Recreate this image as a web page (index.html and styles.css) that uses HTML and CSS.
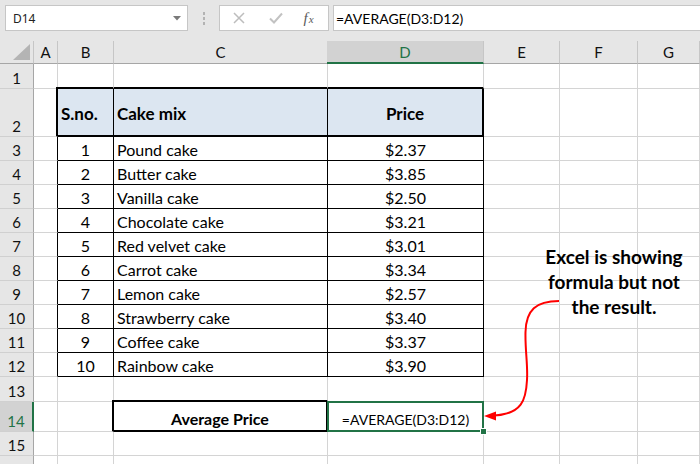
FILE: index.html
```html
<!DOCTYPE html>
<html>
<head>
<meta charset="utf-8">
<link rel="stylesheet" href="styles.css">
</head>
<body>
<div class="app">
  <div class="fbar">
    <div class="namebox"><span>D14</span><svg class="caret" width="8" height="5" viewBox="0 0 8 5"><path d="M0 0H8L4 4.5Z" fill="#7a7a7a"/></svg></div>
    <div class="grip"><i></i><i></i><i></i></div>
    <div class="btns">
      <span class="bx"><svg width="12" height="12" viewBox="0 0 12 12"><path d="M1 1L11 11M11 1L1 11" stroke="#bdbdbd" stroke-width="1.5"/></svg></span>
      <span class="bx"><svg width="14" height="12" viewBox="0 0 14 12"><path d="M1 6.5L5 10.5L13 1.5" fill="none" stroke="#c2c2c2" stroke-width="2"/></svg></span>
      <span class="fx"><i>f</i><i class="x">x</i></span>
    </div>
    <div class="formula">=AVERAGE(D3:D12)</div>
  </div>
  <div class="sheet">
    <div class="corner"><svg width="17" height="16" viewBox="0 0 17 16"><path d="M17 0V16H0Z" fill="#b4b4b4"/></svg></div>
    <div class="ch">A</div><div class="ch">B</div><div class="ch">C</div><div class="ch selc">D</div><div class="ch">E</div><div class="ch">F</div><div class="ch">G</div>

    <div class="rh">1</div><div class="c"></div><div class="c tt"></div><div class="c tt"></div><div class="c tt"></div><div class="c"></div><div class="c"></div><div class="c"></div>

    <div class="rh">2</div><div class="c rl2"></div><div class="c hd hdL">S.no.</div><div class="c hd">Cake mix</div><div class="c hd hdR">Price</div><div class="c"></div><div class="c"></div><div class="c"></div>

    <div class="rh">3</div><div class="c rl"></div><div class="c td ctr">1</div><div class="c td">Pound cake</div><div class="c td ctr">$2.37</div><div class="c"></div><div class="c"></div><div class="c"></div>
    <div class="rh">4</div><div class="c rl"></div><div class="c td ctr">2</div><div class="c td">Butter cake</div><div class="c td ctr">$3.85</div><div class="c"></div><div class="c"></div><div class="c"></div>
    <div class="rh">5</div><div class="c rl"></div><div class="c td ctr">3</div><div class="c td">Vanilla cake</div><div class="c td ctr">$2.50</div><div class="c"></div><div class="c"></div><div class="c"></div>
    <div class="rh">6</div><div class="c rl"></div><div class="c td ctr">4</div><div class="c td">Chocolate cake</div><div class="c td ctr">$3.21</div><div class="c"></div><div class="c"></div><div class="c"></div>
    <div class="rh">7</div><div class="c rl"></div><div class="c td ctr">5</div><div class="c td">Red velvet cake</div><div class="c td ctr">$3.01</div><div class="c"></div><div class="c"></div><div class="c"></div>
    <div class="rh">8</div><div class="c rl"></div><div class="c td ctr">6</div><div class="c td">Carrot cake</div><div class="c td ctr">$3.34</div><div class="c"></div><div class="c"></div><div class="c"></div>
    <div class="rh">9</div><div class="c rl"></div><div class="c td ctr">7</div><div class="c td">Lemon cake</div><div class="c td ctr">$2.57</div><div class="c"></div><div class="c"></div><div class="c"></div>
    <div class="rh">10</div><div class="c rl"></div><div class="c td ctr">8</div><div class="c td">Strawberry cake</div><div class="c td ctr">$3.40</div><div class="c"></div><div class="c"></div><div class="c"></div>
    <div class="rh">11</div><div class="c rl"></div><div class="c td ctr">9</div><div class="c td">Coffee cake</div><div class="c td ctr">$3.37</div><div class="c"></div><div class="c"></div><div class="c"></div>
    <div class="rh">12</div><div class="c rl"></div><div class="c td ctr">10</div><div class="c td">Rainbow cake</div><div class="c td ctr">$3.90</div><div class="c"></div><div class="c"></div><div class="c"></div>

    <div class="rh">13</div><div class="c"></div><div class="c"></div><div class="c tt"></div><div class="c"></div><div class="c"></div><div class="c"></div><div class="c"></div>

    <div class="rh selr">14</div><div class="c"></div><div class="c rl2"></div><div class="c avg">Average Price</div><div class="c act ctr">=AVERAGE(D3:D12)<span class="handle"></span></div><div class="c"></div><div class="c"></div><div class="c"></div>

    <div class="rh">15</div><div class="c"></div><div class="c"></div><div class="c"></div><div class="c"></div><div class="c"></div><div class="c"></div><div class="c"></div>
    <div class="rh"></div><div class="c"></div><div class="c"></div><div class="c"></div><div class="c"></div><div class="c"></div><div class="c"></div><div class="c"></div>

    <div class="note">Excel is showing<br>formula but not<br>the result.</div>
  </div>
  <svg class="arrow" width="700" height="464" viewBox="0 0 700 464">
    <path d="M559,301 C536,301 526,310 525.5,332 C525,350 528,365 527,380 C526,400 522,414 494,415.5" fill="none" stroke="#f00" stroke-width="2"/>
    <path d="M484,416 L496,411.5 L496,420.5 Z" fill="#f00"/>
  </svg>
</div>
</body>
</html>
```

FILE: styles.css
```css
* { box-sizing: border-box; }
body { margin: 0; background: #fff; }

.app {
  position: relative;
  width: 700px;
  height: 464px;
  overflow: hidden;
  background: #fff;
  font-family: Lato, "Liberation Sans", sans-serif;
  color: #000;
}

/* formula bar */
.fbar {
  height: 41px;
  background: #e6e6e6;
  display: flex;
  align-items: flex-start;
  padding: 5px 0 0 5px;
}
.namebox {
  width: 183px;
  height: 26px;
  background: #fff;
  border: 1px solid #c6c6c6;
  display: flex;
  align-items: center;
  justify-content: space-between;
  padding: 0 6px 0 7px;
  font: 12px "Noto Sans", "Open Sans", sans-serif;
  color: #222;
}
.caret { margin-top: 1px; }
.grip {
  width: 31px;
  height: 26px;
  display: flex;
  flex-direction: column;
  align-items: center;
  justify-content: center;
  gap: 2px;
}
.grip i {
  display: block;
  width: 2px;
  height: 3px;
  background: #b3b3b3;
}
.btns {
  width: 110px;
  height: 26px;
  background: #fff;
  border: 1px solid #c6c6c6;
  display: grid;
  grid-template-columns: 38px 35px 1fr;
  align-items: center;
}
.bx { display: flex; justify-content: center; align-items: center; }
.fx {
  display: flex;
  justify-content: center;
  align-items: baseline;
  font-family: "Liberation Serif", serif;
  color: #5a5a5a;
  font-size: 15px;
  padding-right: 4px;
}
.fx .x { font-size: 11px; margin-left: 1px; }
.formula {
  flex: 1;
  height: 26px;
  margin-left: 4px;
  background: #fff;
  border: 1px solid #c6c6c6;
  border-right: none;
  display: flex;
  align-items: center;
  padding-left: 2px;
  font-size: 14px;
}

/* sheet */
.sheet {
  position: relative;
  display: grid;
  grid-template-columns: 34px 24px 56px 214px 156px 76px 78px 1fr;
  grid-template-rows: 23px 25px 48px repeat(10, 24px) 25px 30px 24px 24px;
  font-size: 16px;
}
.corner {
  background: #e6e6e6;
  border-right: 1px solid #c6c6c6;
  border-bottom: 1px solid #a6a6a6;
  display: flex;
  align-items: flex-end;
  justify-content: flex-end;
  padding: 0 3px 3px 0;
}
.ch {
  background: #e6e6e6;
  border-right: 1px solid #c6c6c6;
  border-bottom: 1px solid #a6a6a6;
  display: flex;
  align-items: center;
  justify-content: center;
  font-size: 15px;
  color: #111;
}
.ch.selc {
  background: #d2d2d2;
  color: #217346;
  border-bottom: 2px solid #217346;
  margin-left: -1px;
}
.rh {
  background: #e6e6e6;
  border-right: 1px solid #a6a6a6;
  border-bottom: 1px solid #d0d0d0;
  display: flex;
  align-items: flex-end;
  justify-content: center;
  font-size: 15px;
  line-height: 20px;
  color: #111;
}
.rh.selr {
  background: #d2d2d2;
  color: #217346;
  border-right: 2px solid #217346;
}

.c {
  border-right: 1px solid #d4d4d4;
  border-bottom: 1px solid #d4d4d4;
  display: flex;
  align-items: flex-end;
  line-height: 20px;
  padding-left: 3px;
  white-space: nowrap;
}
.ctr { justify-content: center; padding-left: 0; }
.tt { border-bottom: 2px solid #000; }
.rl { border-right: 1px solid #000; }
.rl2 { border-right: 2px solid #000; }
.td { border-right: 1px solid #000; border-bottom: 1px solid #000; }

.hd {
  background: #dce6f1;
  font-weight: bold;
  font-size: 17px;
  border-right: 1px solid #000;
  border-bottom: 2px solid #000;
  align-items: center;
  padding-top: 4px;
}
.hdL { position: relative; }
.hdL::before {
  content: "";
  position: absolute;
  left: -2px;
  top: -2px;
  width: 2px;
  height: 2px;
  background: #000;
}
.hdR { border-right: 2px solid #000; justify-content: center; padding-left: 0; }

.avg {
  position: relative;
  font-weight: bold;
  justify-content: center;
  border-right: 2px solid #000;
  border-bottom: 2px solid #000;
  font-size: 16px;
  padding-left: 0;
  padding-bottom: 1px;
}
.avg::before {
  content: "";
  position: absolute;
  left: -2px;
  top: -2px;
  width: 2px;
  height: 2px;
  background: #000;
}
.act {
  position: relative;
  border: 2px solid #217346;
  margin-left: -1px;
  margin-top: -1px;
  font-size: 14px;
}
.handle {
  position: absolute;
  right: -5px;
  bottom: -5px;
  width: 7px;
  height: 7px;
  background: #217346;
  border: 1px solid #fff;
}

.note {
  position: absolute;
  left: 528px;
  top: 203px;
  width: 172px;
  text-align: center;
  font-weight: bold;
  font-size: 19px;
  line-height: 25px;
}
.arrow {
  position: absolute;
  left: 0;
  top: 0;
  pointer-events: none;
}
```
